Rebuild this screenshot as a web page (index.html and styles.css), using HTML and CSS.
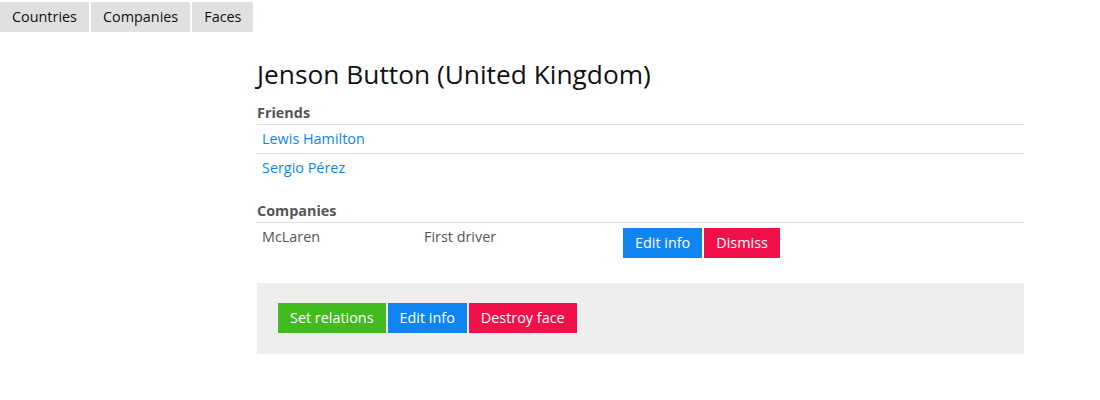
FILE: index.html
```html
<!DOCTYPE html>
<html>
<head>
<meta charset="utf-8">
<link rel="stylesheet" href="styles.css">
</head>
<body>
<nav class="tabs">
  <a class="tab" href="#">Countries</a>
  <a class="tab" href="#">Companies</a>
  <a class="tab" href="#">Faces</a>
</nav>
<main class="content">
  <h1 class="title">Jenson Button (United Kingdom)</h1>
  <section class="section">
    <h2 class="section-head">Friends</h2>
    <div class="row"><a class="link" href="#">Lewis Hamilton</a></div>
    <div class="row last"><a class="link" href="#">Sergio Pérez</a></div>
  </section>
  <section class="section companies">
    <h2 class="section-head">Companies</h2>
    <div class="company-row">
      <div class="cell">McLaren</div>
      <div class="cell">First driver</div>
      <div class="cell actions">
        <a class="btn blue" href="#">Edit info</a>
        <a class="btn red" href="#">Dismiss</a>
      </div>
    </div>
  </section>
  <div class="panel">
    <a class="btn green" href="#">Set relations</a>
    <a class="btn blue" href="#">Edit info</a>
    <a class="btn red" href="#">Destroy face</a>
  </div>
</main>
</body>
</html>
```

FILE: styles.css
```css
* { box-sizing: border-box; }
body {
  margin: 0;
  font-family: "Open Sans", "Liberation Sans", sans-serif;
  font-size: 14.4px;
  line-height: 20px;
  color: #555;
  background: #fff;
}
a { text-decoration: none; }
.tabs {
  display: flex;
  gap: 2px;
  margin-top: 2px;
}
.tab {
  display: block;
  background: #e0e0e0;
  color: #111;
  padding: 5px 12px;
  line-height: 20px;
}
.content {
  margin-left: 257px;
  width: 767px;
}
.title {
  margin: 25px 0 12px;
  font-size: 26.3px;
  line-height: 34px;
  font-weight: normal;
  color: #111;
}
.section-head {
  margin: 0;
  font-size: 14.4px;
  font-weight: bold;
  line-height: 20px;
  color: #555;
  padding-bottom: 1px;
  border-bottom: 1px solid #ddd;
}
.row {
  padding: 4px 5px 4px;
  border-bottom: 1px solid #ddd;
}
.row.last { border-bottom: none; }
.link { color: #1184f0; }
.companies { margin-top: 19px; }
.company-row {
  display: grid;
  grid-template-columns: 162px 199px 1fr;
}
.cell {
  padding: 4px 5px 4px;
}
.actions {
  display: flex;
  gap: 2px;
  padding-top: 5px;
}
.btn {
  display: inline-block;
  color: #fff;
  padding: 5px 12px 5px;
  line-height: 20px;
}
.blue { background: #1084f0; }
.red { background: #f21048; }
.green { background: #41bb20; }
.panel {
  margin-top: 21px;
  background: #eee;
  padding: 20px 21px 21px;
  display: flex;
  gap: 2px;
}
```
